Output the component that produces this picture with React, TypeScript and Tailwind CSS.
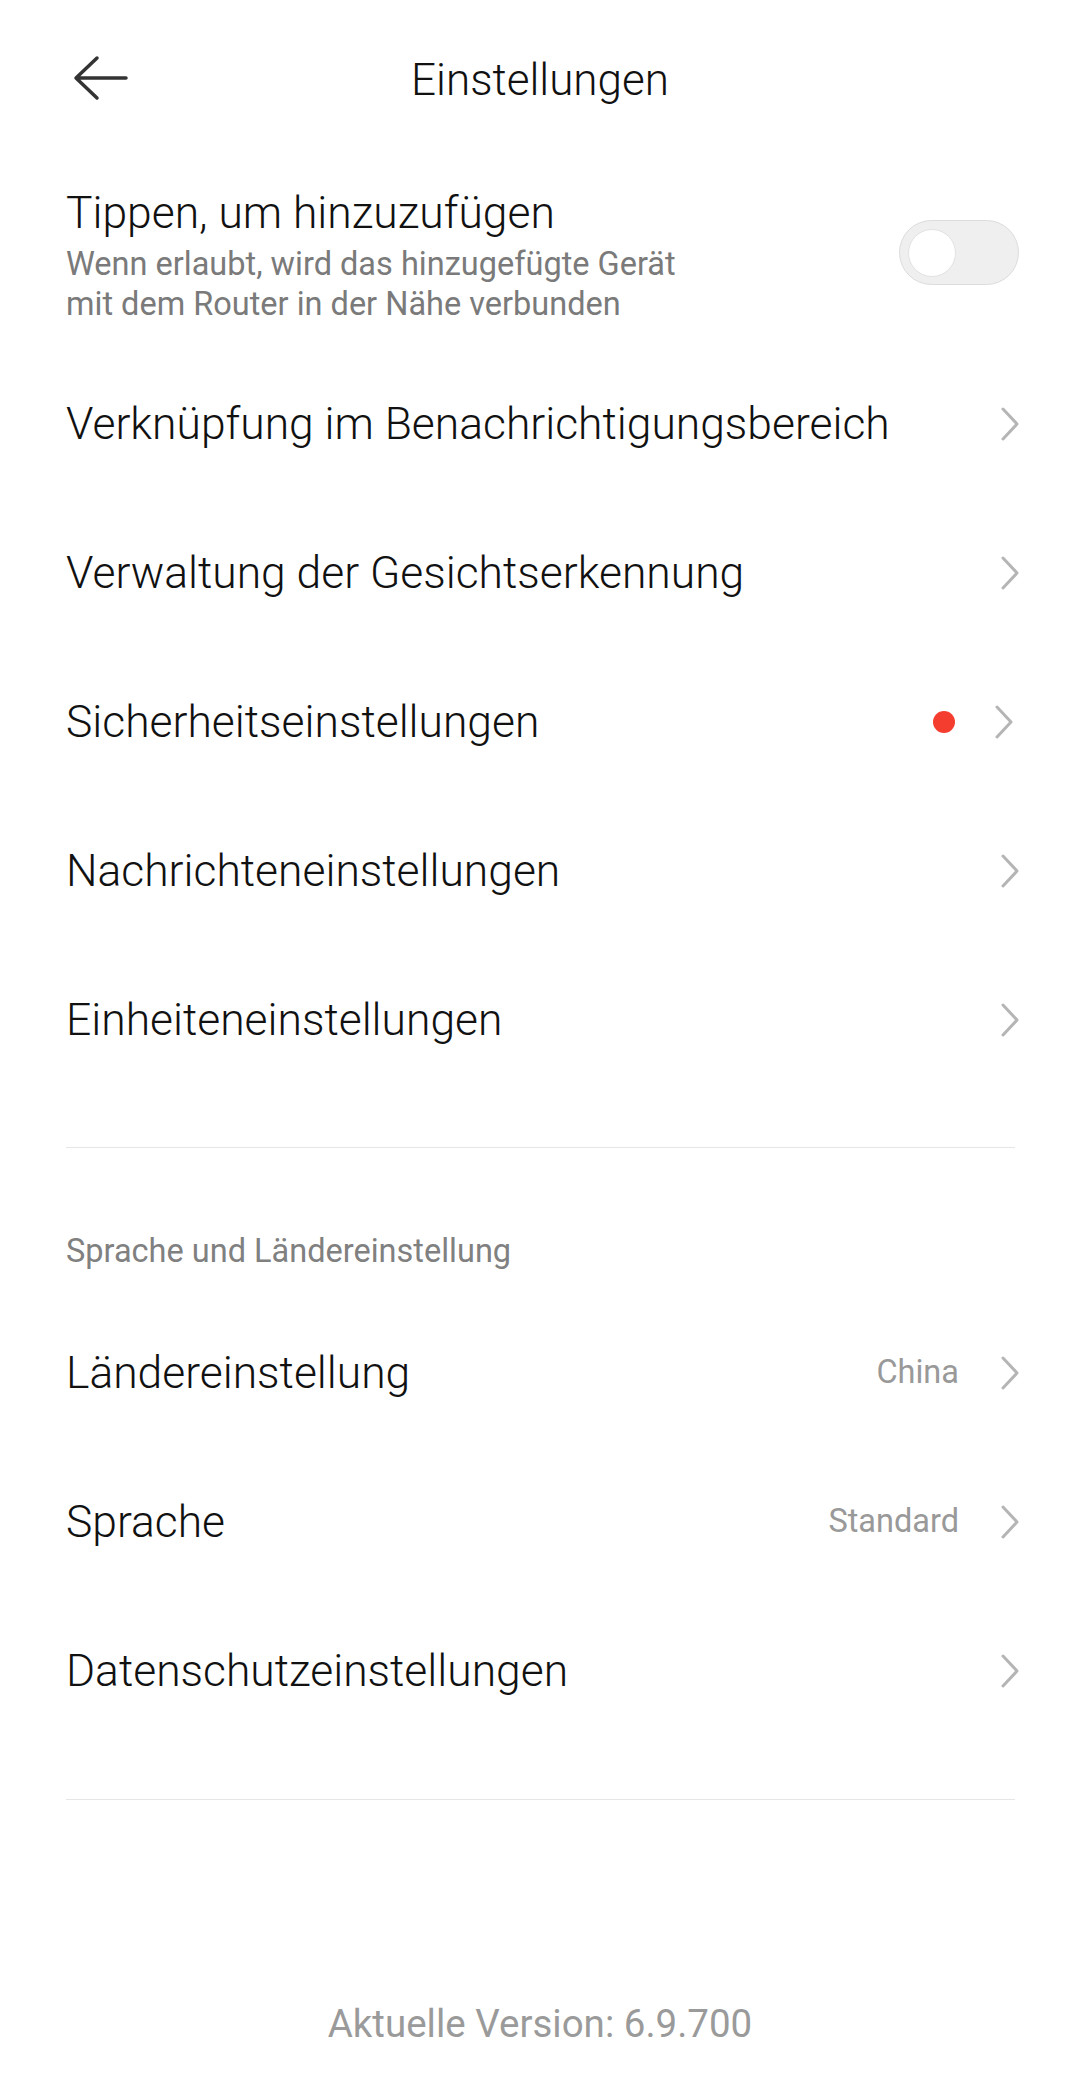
import React from "react";

type Row = {
  label: string;
  value?: string;
  dot?: boolean;
};

const topRows: Row[] = [
  { label: "Verknüpfung im Benachrichtigungsbereich" },
  { label: "Verwaltung der Gesichtserkennung" },
  { label: "Sicherheitseinstellungen", dot: true },
  { label: "Nachrichteneinstellungen" },
  { label: "Einheiteneinstellungen" },
];

const regionRows: Row[] = [
  { label: "Ländereinstellung", value: "China" },
  { label: "Sprache", value: "Standard" },
  { label: "Datenschutzeinstellungen" },
];

function Chevron({ shift }: { shift?: boolean }) {
  return (
    <svg
      width="20"
      height="34"
      viewBox="0 0 20 34"
      fill="none"
      className={shift ? "mr-[6px] shrink-0" : "shrink-0"}
    >
      <path d="M4 2 L18 17 L4 32" stroke="#b5b5b5" strokeWidth="3" strokeLinecap="round" strokeLinejoin="round" />
    </svg>
  );
}

function SettingRow({ row }: { row: Row }) {
  return (
    <div className="h-[149px] flex items-center justify-between">
      <span className="text-[44.4px] leading-[56px] font-light text-[#111]">{row.label}</span>
      <div className="flex items-center">
        {row.value && <span className="text-[32.5px] text-[#999] mr-[40px]">{row.value}</span>}
        {row.dot && <span className="w-[22px] h-[22px] rounded-full bg-[#f43d2f] mr-[38px]" />}
        <Chevron shift={row.dot} />
      </div>
    </div>
  );
}

export default function App() {
  return (
    <div className="w-[1080px] h-[2091px] bg-white font-['Roboto',sans-serif] flex flex-col">
      <header className="h-[160px] relative flex items-center justify-center">
        <button className="absolute left-[72px] top-[54px]">
          <svg width="58" height="48" viewBox="0 0 58 48" fill="none">
            <path
              d="M54 24 H5 M25 4 L4 24 L25 44"
              stroke="#333"
              strokeWidth="3.5"
              strokeLinecap="round"
              strokeLinejoin="round"
            />
          </svg>
        </button>
        <h1 className="text-[44px] leading-[56px] font-light text-[#111]">Einstellungen</h1>
      </header>

      <div className="pl-[66px] pr-[61px]">
        <div className="pt-[25px] pb-[25px] flex items-center justify-between">
          <div>
            <div className="text-[44.4px] leading-[56px] font-light text-[#111]">Tippen, um hinzuzufügen</div>
            <div className="mt-[3px] text-[32.5px] leading-[40px] text-[#7a7a7a]">
              Wenn erlaubt, wird das hinzugefügte Gerät
              <br />
              mit dem Router in der Nähe verbunden
            </div>
          </div>
          <div className="w-[120px] h-[65px] rounded-full bg-[#efefef] border-[1.5px] border-[#dcdcdc] flex items-center pl-[8px] mb-[4px]">
            <div className="w-[48px] h-[48px] rounded-full bg-white border border-[#e2e2e2]" />
          </div>
        </div>

        {topRows.map((r) => (
          <SettingRow key={r.label} row={r} />
        ))}

        <div className="mt-[53px] mr-[4px] h-px bg-[#e6e6e6]" />

        <div className="mt-[83px] text-[32.5px] leading-[40px] text-[#808080]">Sprache und Ländereinstellung</div>

        <div className="mt-[27px]">
          {regionRows.map((r) => (
            <SettingRow key={r.label} row={r} />
          ))}
        </div>

        <div className="mt-[54px] mr-[4px] h-px bg-[#e6e6e6]" />
      </div>

      <div className="mt-[199px] text-center text-[38.5px] leading-[50px] text-[#9a9a9a]">
        Aktuelle Version: 6.9.700
      </div>
    </div>
  );
}
